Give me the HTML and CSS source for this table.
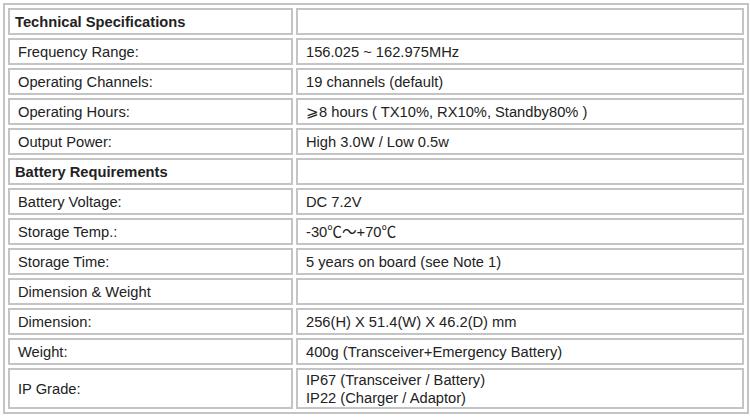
FILE: index.html
```html
<!DOCTYPE html>
<html>
<head>
<meta charset="utf-8">
<link rel="stylesheet" href="styles.css">
</head>
<body>
<table class="spec">
  <colgroup><col class="c1"><col class="c2"></colgroup>
  <tr><td class="head">Technical Specifications</td><td></td></tr>
  <tr><td>Frequency Range:</td><td>156.025 ~ 162.975MHz</td></tr>
  <tr><td>Operating Channels:</td><td>19 channels (default)</td></tr>
  <tr><td>Operating Hours:</td><td>⩾8 hours ( TX10%, RX10%, Standby80% )</td></tr>
  <tr><td>Output Power:</td><td>High 3.0W / Low 0.5w</td></tr>
  <tr><td class="head">Battery Requirements</td><td></td></tr>
  <tr><td>Battery Voltage:</td><td>DC 7.2V</td></tr>
  <tr><td>Storage Temp.:</td><td>-30℃～+70℃</td></tr>
  <tr><td>Storage Time:</td><td>5 years on board (see Note 1)</td></tr>
  <tr><td>Dimension &amp; Weight</td><td></td></tr>
  <tr><td>Dimension:</td><td>256(H) X 51.4(W) X 46.2(D) mm</td></tr>
  <tr><td>Weight:</td><td>400g (Transceiver+Emergency Battery)</td></tr>
  <tr class="tall"><td>IP Grade:</td><td>IP67 (Transceiver / Battery)<br>IP22 (Charger / Adaptor)</td></tr>
</table>
</body>
</html>
```

FILE: styles.css
```css
html, body {
  margin: 0;
  padding: 0;
  background: #ffffff;
}

.spec {
  margin: 3px 0 0 3px;
  border: 2px solid #c4c4c4;
  border-spacing: 3px;
  table-layout: fixed;
  width: 746px;
  font-family: "Liberation Sans", Arial, "Noto Sans CJK SC", sans-serif;
  font-size: 14.7px;
  line-height: 18px;
  color: #222222;
}

.c1 { width: 285px; }
.c2 { width: 448px; }

.spec td {
  border: 2px solid #c4c4c4;
  height: 23px;
  padding: 0 7px 0 8px;
  vertical-align: middle;
  white-space: nowrap;
}

.spec td.head {
  font-weight: bold;
  padding-left: 5px;
}

.spec tr.tall td {
  height: 37px;
}
```
